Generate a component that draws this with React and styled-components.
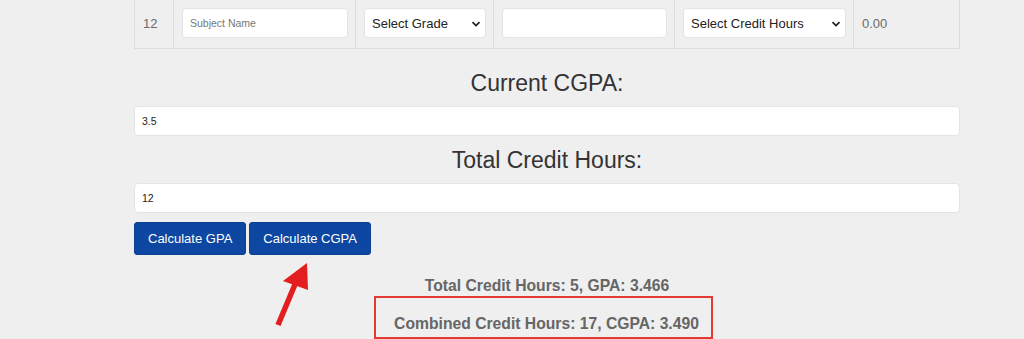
import React, { useState } from 'react';
import styled, { createGlobalStyle } from 'styled-components';

const GlobalStyle = createGlobalStyle`
  body {
    margin: 0;
    background: #efefef;
    font-family: "Liberation Sans", Arial, sans-serif;
    overflow: hidden;
  }
`;

const Page = styled.div`
  position: relative;
  width: 826px;
  margin-left: 134px;
`;

const Row = styled.div`
  display: grid;
  grid-template-columns: 39px 182px 138px 181px 179px 107px;
  border-bottom: 1px solid #dcdcdc;
`;

const Cell = styled.div`
  display: flex;
  align-items: center;
  height: 48px;
  padding: 0 7px 2px 8px;
  box-sizing: border-box;
  border-left: 1px solid #dcdcdc;
  ${({ $last }) => $last && 'border-right: 1px solid #dcdcdc;'}
  color: #6b6b6b;
  font-size: 13px;
`;

const CellInput = styled.input`
  width: 100%;
  height: 30px;
  box-sizing: border-box;
  border: 1px solid #e4e4e4;
  border-radius: 4px;
  background: #fff;
  padding: 0 7px;
  font-family: inherit;
  font-size: 10.5px;
  color: #222;
  outline: none;
  &::placeholder {
    color: #777;
  }
`;

const SelectWrap = styled.div`
  position: relative;
  width: 100%;
`;

const Select = styled.select`
  appearance: none;
  width: 100%;
  height: 30px;
  box-sizing: border-box;
  border: 1px solid #e4e4e4;
  border-radius: 4px;
  background: #fff;
  padding: 0 7px;
  font-family: inherit;
  font-size: 13px;
  color: #222;
  outline: none;
`;

const Chevron = styled.svg`
  position: absolute;
  right: 5px;
  top: 13px;
  pointer-events: none;
`;

const Heading = styled.h2`
  margin: ${({ $first }) => ($first ? '21px' : '11px')} 0 10px;
  text-align: center;
  font-size: 23px;
  font-weight: 400;
  line-height: 26px;
  color: #333;
`;

const WideInput = styled.input`
  display: block;
  width: 100%;
  height: 30px;
  box-sizing: border-box;
  border: 1px solid #e4e4e4;
  border-radius: 4px;
  background: #fff;
  padding: 0 7px;
  font-family: inherit;
  font-size: 10.5px;
  color: #222;
  outline: none;
`;

const ButtonRow = styled.div`
  display: flex;
  gap: 3px;
  margin-top: 9px;
`;

const Button = styled.button`
  height: 33px;
  padding: 0 13px;
  border: 1px solid #0a3f94;
  border-radius: 3px;
  background: #0d47a1;
  color: #fff;
  font-family: inherit;
  font-size: 13px;
  cursor: pointer;
`;

const Results = styled.div`
  display: flex;
  flex-direction: column;
  align-items: center;
  margin-top: 22px;
  color: #666;
  font-size: 15.7px;
  font-weight: 700;
`;

const ResultLine = styled.div`
  line-height: 18px;
`;

const Highlight = styled.div`
  margin-top: 1px;
  margin-right: 7px;
  border: 2px solid #e53935;
  padding: 17px 12px 4px 18px;
`;

const Arrow = styled.svg`
  position: absolute;
  left: 136px;
  top: 258px;
`;

const ChevronIcon = () => (
  <Chevron width="10" height="6" viewBox="0 0 10 6">
    <path d="M1.5 1.2 L5 4.6 L8.5 1.2" fill="none" stroke="#222" strokeWidth="1.8" />
  </Chevron>
);

const App = () => {
  const [cgpa, setCgpa] = useState('3.5');
  const [hours, setHours] = useState('12');

  return (
    <Page>
      <GlobalStyle />
      <Row>
        <Cell>12</Cell>
        <Cell><CellInput type="text" placeholder="Subject Name" /></Cell>
        <Cell>
          <SelectWrap>
            <Select defaultValue="">
              <option value="">Select Grade</option>
              <option>A</option>
              <option>B</option>
            </Select>
            <ChevronIcon />
          </SelectWrap>
        </Cell>
        <Cell><CellInput type="text" /></Cell>
        <Cell>
          <SelectWrap>
            <Select defaultValue="">
              <option value="">Select Credit Hours</option>
              <option>1</option>
              <option>2</option>
              <option>3</option>
            </Select>
            <ChevronIcon />
          </SelectWrap>
        </Cell>
        <Cell $last>0.00</Cell>
      </Row>

      <Heading $first>Current CGPA:</Heading>
      <WideInput type="text" value={cgpa} onChange={(e) => setCgpa(e.target.value)} />
      <Heading>Total Credit Hours:</Heading>
      <WideInput type="text" value={hours} onChange={(e) => setHours(e.target.value)} />

      <ButtonRow>
        <Button>Calculate GPA</Button>
        <Button>Calculate CGPA</Button>
      </ButtonRow>

      <Results>
        <ResultLine>Total Credit Hours: 5, GPA: 3.466</ResultLine>
        <Highlight>
          <ResultLine>Combined Credit Hours: 17, CGPA: 3.490</ResultLine>
        </Highlight>
      </Results>

      <Arrow width="45" height="72" viewBox="0 0 45 72">
        <line x1="8" y1="67" x2="26" y2="24" stroke="#e31e1e" strokeWidth="5.5" />
        <polygon points="37,5 13,23 38,32" fill="#e31e1e" />
      </Arrow>
    </Page>
  );
};

export default App;
